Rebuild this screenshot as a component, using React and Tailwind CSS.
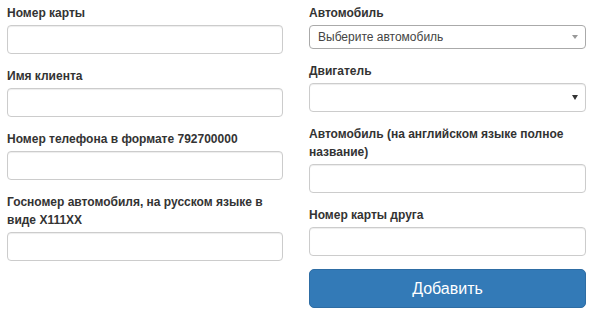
import React from "react";

const inputCls =
  "block w-full h-[29px] rounded-[4px] border border-[#ccc] bg-white shadow-[inset_0_1px_1px_rgba(0,0,0,0.075)]";

function Field({ label, mb = "mb-[13px]" }) {
  return (
    <div className={mb}>
      <label className="block text-[12px] leading-[18px] font-bold text-[#333] mb-[3px]">{label}</label>
      <div className={inputCls} />
    </div>
  );
}

export default function App() {
  return (
    <div
      className="w-[600px] h-[326px] bg-white pt-[4px] px-[7px] flex gap-[26px]"
      style={{ fontFamily: '"Liberation Sans", Arial, sans-serif' }}
    >
      <div className="w-[276px]">
        <Field label="Номер карты" />
        <Field label="Имя клиента" />
        <Field label="Номер телефона в формате 792700000" />
        <Field label="Госномер автомобиля, на русском языке в виде X111XX" />
      </div>
      <div className="w-[277px]">
        <div className="mb-[13px]">
          <label className="block text-[12px] leading-[18px] font-bold text-[#333] mb-[3px]">Автомобиль</label>
          <div className="flex items-center justify-between h-[24px] rounded-[4px] border border-[#aaa] bg-white pl-[8px] pr-[7px]">
            <span className="text-[12px] text-[#444]">Выберите автомобиль</span>
            <span className="w-0 h-0 border-l-[3.5px] border-r-[3.5px] border-t-[4px] border-l-transparent border-r-transparent border-t-[#999]" />
          </div>
        </div>
        <div className="mb-[13px]">
          <label className="block text-[12px] leading-[18px] font-bold text-[#333] mb-[3px]">Двигатель</label>
          <div className="flex items-center justify-end h-[29px] rounded-[4px] border border-[#ccc] bg-white pr-[7px] shadow-[inset_0_1px_1px_rgba(0,0,0,0.075)]">
            <span className="w-0 h-0 border-l-[3.5px] border-r-[3.5px] border-t-[5px] border-l-transparent border-r-transparent border-t-[#333]" />
          </div>
        </div>
        <Field label="Автомобиль (на английском языке полное название)" />
        <Field label="Номер карты друга" />
        <button className="w-full h-[39px] rounded-[5px] bg-[#337ab7] border border-[#2e6da4] text-white text-[16px] leading-[20px]">
          Добавить
        </button>
      </div>
    </div>
  );
}
